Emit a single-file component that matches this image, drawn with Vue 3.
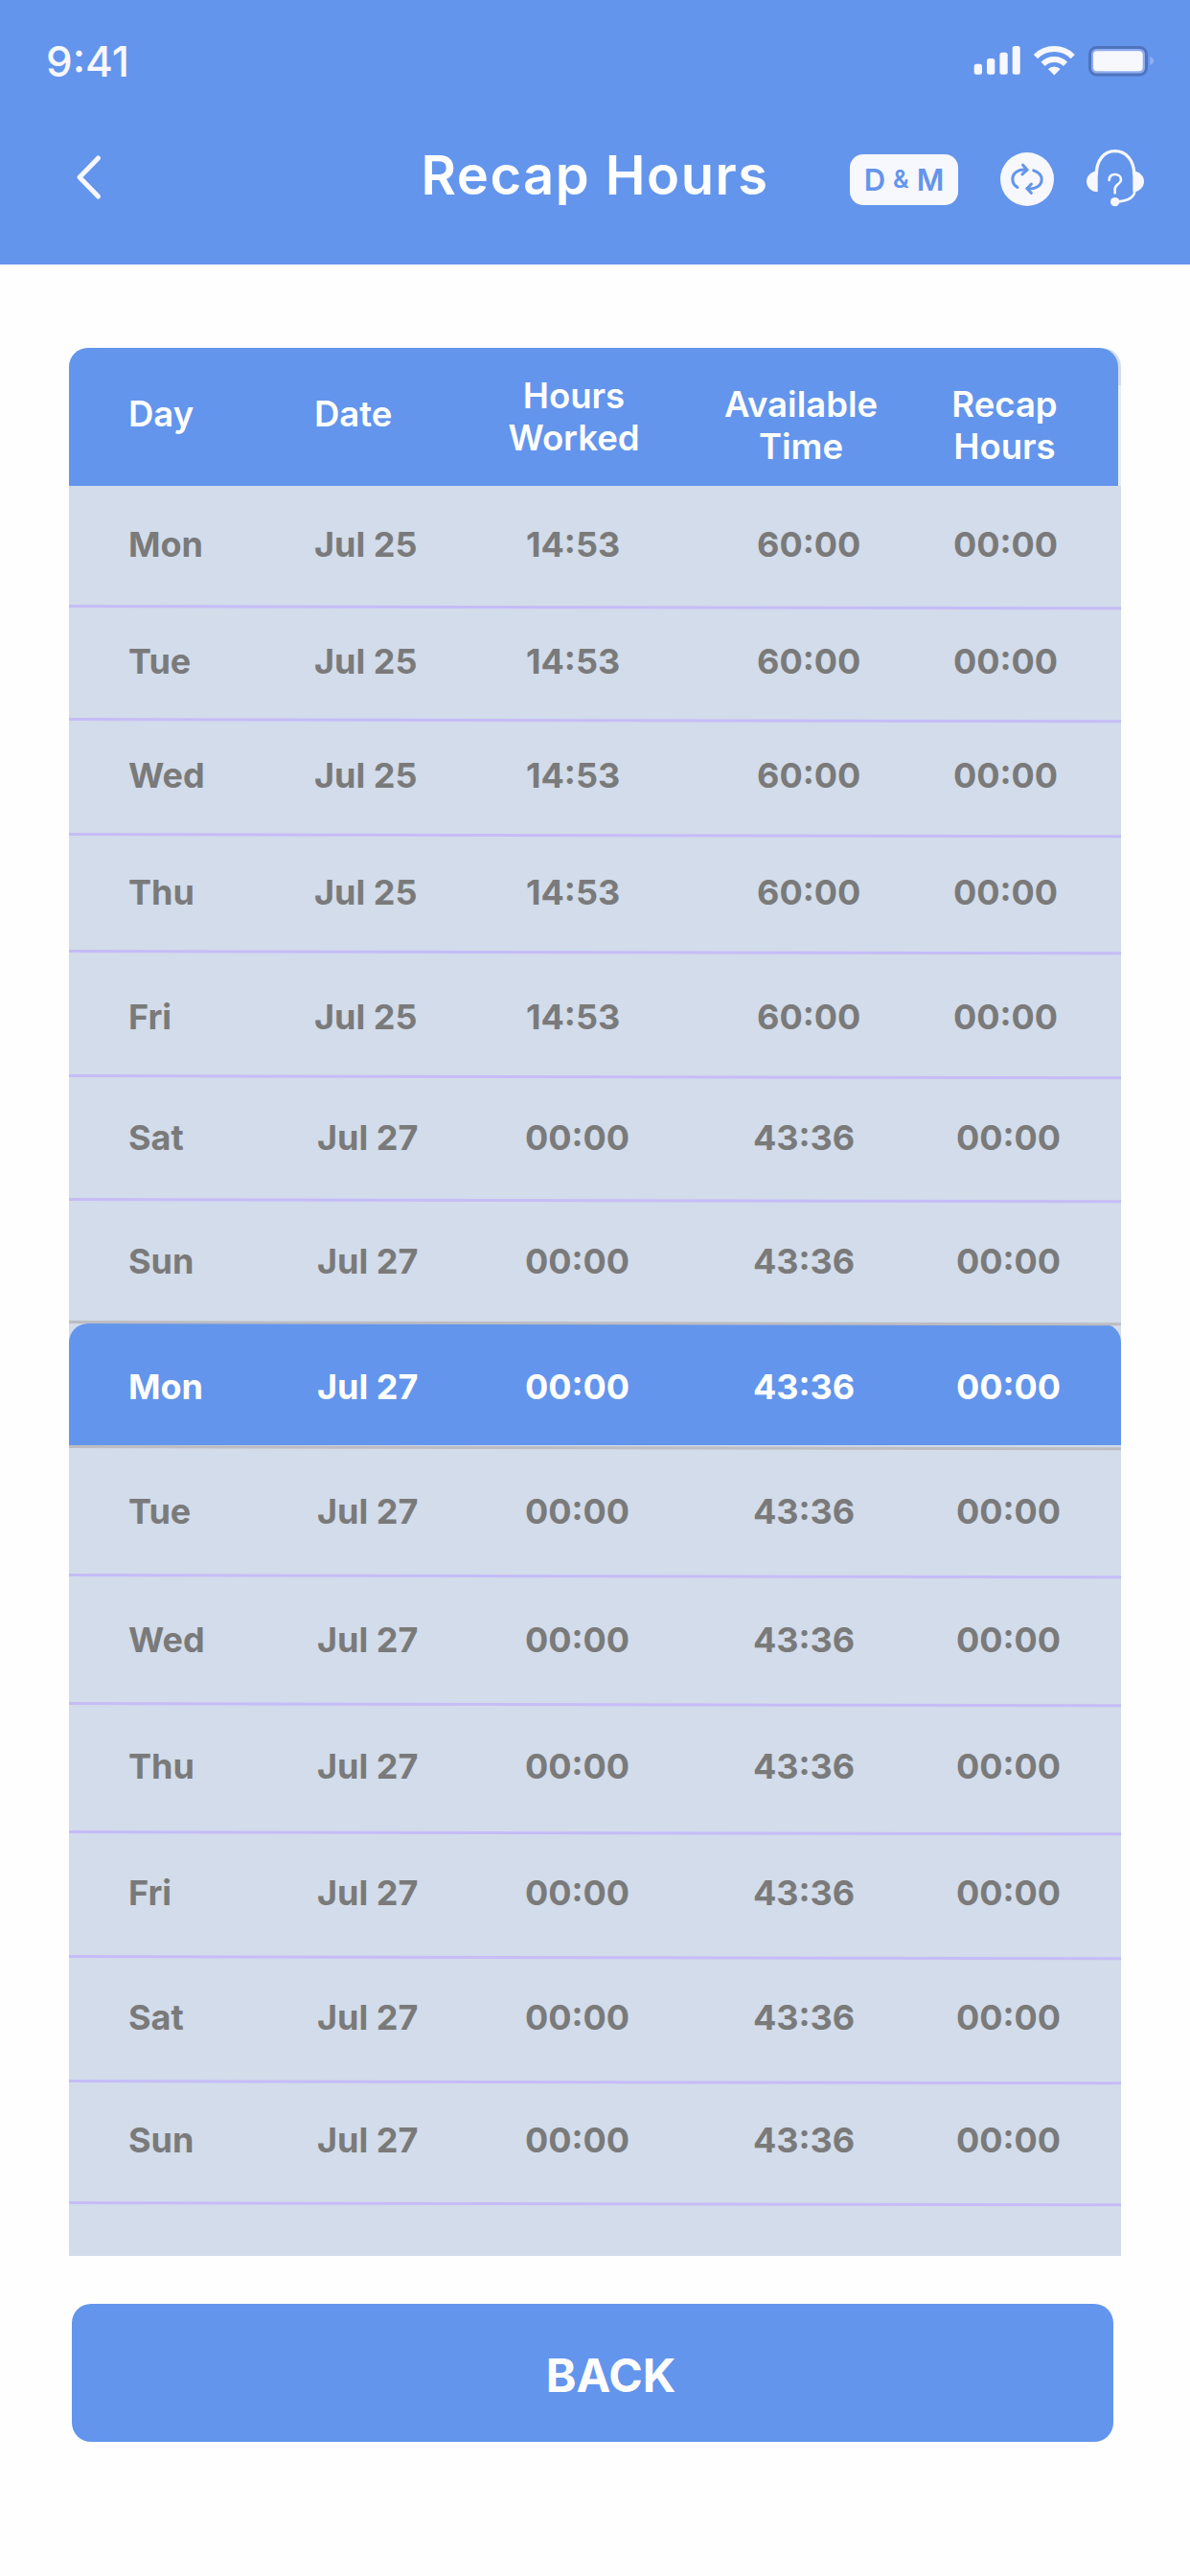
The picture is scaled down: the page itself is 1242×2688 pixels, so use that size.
<script setup>
const head = [
  { text: ['Day'], cls: 'up' },
  { text: ['Date'], cls: 'up' },
  { text: ['Hours', 'Worked'], cls: 'mid' },
  { text: ['Available', 'Time'], cls: 'mid down' },
  { text: ['Recap', 'Hours'], cls: 'mid down' }
]
const rows = [
  { d: 'Mon', date: 'Jul 25', w: '14:53', a: '60:00', h: 124, off: -2, early: true },
  { d: 'Tue', date: 'Jul 25', w: '14:53', a: '60:00', h: 118, off: 0, early: true },
  { d: 'Wed', date: 'Jul 25', w: '14:53', a: '60:00', h: 120, off: 0, early: true },
  { d: 'Thu', date: 'Jul 25', w: '14:53', a: '60:00', h: 122, off: 2, early: true },
  { d: 'Fri', date: 'Jul 25', w: '14:53', a: '60:00', h: 130, off: 10, early: true },
  { d: 'Sat', date: 'Jul 27', w: '00:00', a: '43:36', h: 129, off: 2 },
  { d: 'Sun', date: 'Jul 27', w: '00:00', a: '43:36', h: 128, off: 4 },
  { d: 'Mon', date: 'Jul 27', w: '00:00', a: '43:36', h: 130, off: 5, active: true },
  { d: 'Tue', date: 'Jul 27', w: '00:00', a: '43:36', h: 134, off: 4 },
  { d: 'Wed', date: 'Jul 27', w: '00:00', a: '43:36', h: 134, off: 4 },
  { d: 'Thu', date: 'Jul 27', w: '00:00', a: '43:36', h: 134, off: 0 },
  { d: 'Fri', date: 'Jul 27', w: '00:00', a: '43:36', h: 130, off: 0 },
  { d: 'Sat', date: 'Jul 27', w: '00:00', a: '43:36', h: 130, off: 0 },
  { d: 'Sun', date: 'Jul 27', w: '00:00', a: '43:36', h: 127, off: -2 }
]
const cellPad = (off) => ({
  paddingTop: Math.max(off, 0) + 'px',
  paddingBottom: Math.max(-off, 0) + 'px'
})
</script>

<template>
  <div class="page">
    <header class="top">
      <div class="status">
        <span class="clock">9:41</span>
        <svg class="status-icons" width="190" height="33" viewBox="1016 47 190 33">
          <g fill="#f7f7fe">
            <rect x="1016.7" y="66.7" width="8.3" height="11" rx="2.5" />
            <rect x="1030" y="61" width="8.3" height="16.7" rx="2.5" />
            <rect x="1043.4" y="54.7" width="8.3" height="23" rx="2.5" />
            <rect x="1056.7" y="48" width="8" height="29.7" rx="2.5" />
            <path d="M1100.3 78.5 L1093.9 72.1 A9 9 0 0 1 1106.7 72.1 Z" />
          </g>
          <g fill="none" stroke="#f7f7fe" stroke-width="6">
            <path d="M1080.9 59.1 A27.5 27.5 0 0 1 1119.7 59.1" />
            <path d="M1088.6 66.8 A16.5 16.5 0 0 1 1112 66.8" />
          </g>
          <rect x="1137.5" y="49.5" width="59" height="28.5" rx="7" fill="#8cadf0" stroke="#4f74bd" stroke-width="3" />
          <rect x="1141" y="53.3" width="51.7" height="21" rx="4" fill="#f7f7fe" />
          <path d="M1200 59 C1203 60 1204.5 62 1204.5 63.5 C1204.5 65 1203 67 1200 68 Z" fill="#8cadf0" />
        </svg>
      </div>
      <nav class="nav">
        <div class="nav-left">
          <svg width="30" height="50" viewBox="0 0 30 50" fill="none" stroke="#f7f7fe" stroke-width="5" stroke-linecap="round" stroke-linejoin="round">
            <path d="M24.500 5 L5 25 L24.500 45" />
          </svg>
        </div>
        <h1 class="title">Recap Hours</h1>
        <div class="nav-right">
          <div class="badge"><span>D</span><span class="amp">&amp;</span><span>M</span></div>
          <svg class="sync" width="56" height="56" viewBox="14 29 166 166" fill="none">
            <circle cx="97" cy="112" r="83" fill="#f7f7fe" />
            <g stroke="#6395ec" stroke-width="9" stroke-linecap="round" stroke-linejoin="round">
              <path d="M84 68 L97 83 L82 97" />
              <path d="M97 83 C70 80 52 92 52 112 C52 124 58 132 67 137" />
              <path d="M110 127 L97 141 L110 155" />
              <path d="M97 141 C124 144 142 132 142 112 C142 100 136 92 117 85" />
            </g>
          </svg>
          <svg class="headset" width="60" height="60" viewBox="283 22 180 180" fill="none">
            <g fill="#f7f7fe">
              <path d="M318 88 C297 92 283 104 283 122 C283 140 297 155 318 155 Z" />
              <path d="M428 88 C449 92 463 104 463 122 C463 140 449 155 428 155 Z" />
              <circle cx="372" cy="186" r="14" />
            </g>
            <g stroke="#f7f7fe" stroke-linecap="round">
              <path d="M314 100 C314 55 338 27 372 27 C406 27 432 55 432 100" stroke-width="10" />
              <path d="M434 152 C432 172 412 182 384 185" stroke-width="8" />
              <path d="M354 118 C354 105 362 100 372 100 C384 100 391 108 391 117 C391 130 372 130 372 146 L372 158" stroke-width="8" />
            </g>
          </svg>
        </div>
      </nav>
    </header>

    <main class="content">
      <section class="table">
        <div class="thead">
          <div v-for="(c, i) in head" :key="i" class="th" :class="c.cls">
            <span v-for="t in c.text" :key="t">{{ t }}</span>
          </div>
        </div>
        <div
          v-for="(r, i) in rows"
          :key="i"
          class="row"
          :class="{ active: r.active, prior: rows[i + 1] && rows[i + 1].active }"
          :style="{ height: r.h + 'px' }"
        >
          <div class="cells" :class="{ early: r.early }" :style="cellPad(r.off)">
            <span>{{ r.d }}</span>
            <span>{{ r.date }}</span>
            <span>{{ r.w }}</span>
            <span>{{ r.a }}</span>
            <span>00:00</span>
          </div>
        </div>
        <div class="tail"></div>
      </section>
      <button class="back" type="button">BACK</button>
    </main>
  </div>
</template>

<style>
html, body { margin: 0; background: #fefefe; }
</style>

<style scoped>
.page {
  width: 1242px;
  height: 2688px;
  overflow: hidden;
  background: #fefefe;
  font-family: Inter, "Liberation Sans", sans-serif;
}
.top {
  height: 276px;
  background: #6395ec;
  color: #f7f7fe;
  display: flex;
  flex-direction: column;
}
.status {
  height: 93px;
  padding: 17px 36px 0 48px;
  display: flex;
  align-items: center;
  justify-content: space-between;
}
.clock {
  font-size: 44px;
  font-weight: 500;
  line-height: 1;
}
.status-icons { display: block; }
.nav {
  height: 146px;
  padding-bottom: 20px;
  display: grid;
  grid-template-columns: 1fr auto 1fr;
  align-items: center;
}
.nav-left {
  padding: 4px 0 0 78px;
  display: flex;
}
.title {
  margin: 0;
  font-size: 56px;
  font-weight: 600;
  letter-spacing: 1.5px;
  line-height: 1;
  color: #fff;
}
.nav-right {
  padding: 8px 48px 0 0;
  display: flex;
  justify-content: flex-end;
  align-items: center;
}
.badge {
  width: 113px;
  height: 53px;
  margin-right: 44px;
  box-sizing: border-box;
  background: #f7f7fe;
  border-radius: 14px;
  color: #6395ec;
  font-size: 31px;
  font-weight: 600;
  display: flex;
  align-items: center;
  justify-content: center;
  gap: 8px;
}
.amp { font-size: 25px; }
.sync { margin-right: 34px; display: block; }
.headset { display: block; margin-top: -2px; }

.content {
  padding: 87px 0 0 72px;
}
.table {
  width: 1098px;
  background: #d2dcea;
  border-radius: 20px 20px 0 0;
  position: relative;
}
.table::before {
  content: "";
  position: absolute;
  right: 0;
  top: 39px;
  width: 3px;
  height: 105px;
  background: #e6ebf4;
}
.thead {
  position: relative;
  height: 144px;
  margin-right: 3px;
  padding-left: 62px;
  background: #6395ec;
  border-radius: 20px 20px 0 0;
  display: grid;
  grid-template-columns: 194px 172px 198px 276px 149px;
  align-items: center;
  color: #fff;
  font-size: 36.500px;
  font-weight: 600;
  line-height: 44px;
}
.th { display: flex; flex-direction: column; }
.th.up { padding-bottom: 6px; }
.th.mid { align-items: center; }
.th.down { padding-top: 18px; }

.row {
  position: relative;
  box-sizing: border-box;
}
.row::after {
  content: "";
  position: absolute;
  z-index: 2;
  left: 0;
  right: 0;
  bottom: -3px;
  height: 3px;
  background: #c6bcf8;
  transform: skewY(0.12deg);
  transform-origin: left center;
}
.row.prior::after,
.row.active::after { background: #bcbcc2; }
.row.active { padding-top: 3px; }
.cells {
  box-sizing: border-box;
  height: 100%;
  padding-left: 62px;
  display: grid;
  grid-template-columns: 197px 217px 238px 212px 1fr;
  align-items: center;
  color: #7a7a7a;
  font-size: 36px;
  font-weight: 700;
  line-height: 44px;
}
.cells.early {
  grid-template-columns: 194px 221px 241px 205px 1fr;
}
.row.active .cells {
  background: #6395ec;
  border-radius: 20px 20px 0 0;
  color: #fff;
}
.tail { height: 57px; }

.back {
  display: block;
  width: 1087px;
  height: 144px;
  margin: 50px 0 0 3px;
  padding: 4px 0 0 38px;
  border: 0;
  border-radius: 20px;
  background: #6395ec;
  color: #fff;
  font-family: inherit;
  font-size: 48px;
  font-weight: 700;
}
</style>
